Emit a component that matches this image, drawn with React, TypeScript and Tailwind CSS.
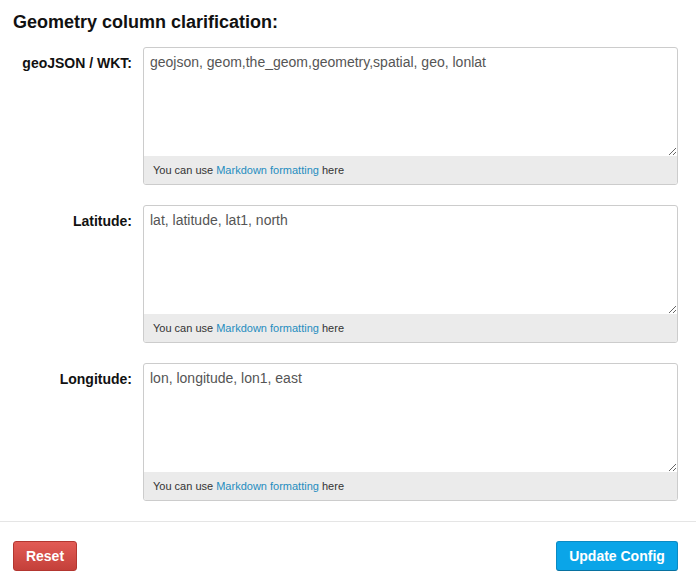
import { useState } from "react";

type Field = { label: string; value: string };

const initial: Field[] = [
  { label: "geoJSON / WKT:", value: "geojson, geom,the_geom,geometry,spatial, geo, lonlat" },
  { label: "Latitude:", value: "lat, latitude, lat1, north" },
  { label: "Longitude:", value: "lon, longitude, lon1, east" },
];

function ConfigRow({ field, onChange }: { field: Field; onChange: (v: string) => void }) {
  return (
    <div className="flex">
      <label className="w-[132px] shrink-0 text-right pt-[6px] text-[14px] leading-[20px] font-bold text-[#111]">
        {field.label}
      </label>
      <div className="ml-[11px] w-[535px] border border-[#ccc] rounded-[3px] overflow-hidden bg-white">
        <textarea
          value={field.value}
          onChange={(e) => onChange(e.target.value)}
          className="block w-full h-[108px] px-[6px] pt-[4px] text-[14px] leading-[20px] text-[#555] outline-none resize-y"
        />
        <div className="h-[28px] bg-[#ebebeb] px-[9px] flex items-center text-[11px] text-[#333]">
          You can use&nbsp;
          <a href="#" className="text-[#1f8dbf]">Markdown formatting</a>
          &nbsp;here
        </div>
      </div>
    </div>
  );
}

export default function App() {
  const [fields, setFields] = useState(initial);

  const update = (i: number, v: string) => {
    setFields(fields.map((f, j) => (j === i ? { ...f, value: v } : f)));
  };

  return (
    <div
      className="w-[696px] h-[586px] bg-white"
      style={{ fontFamily: '"Liberation Sans", Arial, sans-serif' }}
    >
      {/* HEADER */}
      <h2 className="pl-[13px] pt-[10px] text-[18px] leading-[24px] font-bold text-[#111]">
        Geometry column clarification:
      </h2>

      <div className="mt-[13px] flex flex-col gap-[20px]">
        {fields.map((f, i) => (
          <ConfigRow key={i} field={f} onChange={(v) => update(i, v)} />
        ))}
      </div>

      <div className="mt-[20px] border-t border-[#e5e5e5]" />

      {/* BUTTONS */}
      <div className="flex justify-between px-[13px] pr-[18px] pt-[19px]">
        <button className="h-[30px] w-[64px] rounded-[3px] border border-[#b33630] bg-gradient-to-b from-[#e25b55] to-[#c4403a] text-white text-[14px] font-bold">
          Reset
        </button>
        <button className="h-[30px] w-[122px] rounded-[3px] border border-[#0a8bc4] border-b-[#0771a0] bg-[#0aa5e8] text-white text-[14px] font-bold">
          Update Config
        </button>
      </div>
    </div>
  );
}
